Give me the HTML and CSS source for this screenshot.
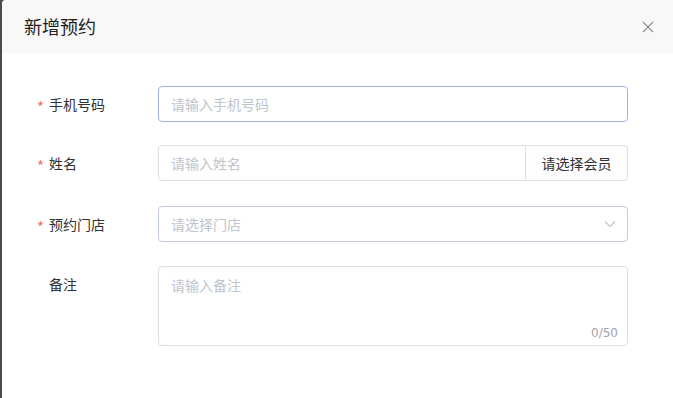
FILE: index.html
```html
<!DOCTYPE html>
<html lang="zh-CN">
<head>
  <meta charset="UTF-8" />
  <title>新增预约</title>
  <link rel="stylesheet" href="styles.css">
</head>
<body>
  <div class="dialog">
    <div class="dialog-header">
      <span class="dialog-title">新增预约</span>
      <span class="dialog-close">
        <svg width="12" height="12" viewBox="0 0 12 12"><path d="M1 1L11 11M11 1L1 11" stroke="#909399" stroke-width="1.3" fill="none"/></svg>
      </span>
    </div>

    <form class="dialog-body">
      <div class="form-item">
        <label class="form-label required">手机号码</label>
        <div class="form-control">
          <input type="text" class="input focused" placeholder="请输入手机号码">
        </div>
      </div>

      <div class="form-item">
        <label class="form-label required">姓名</label>
        <div class="form-control input-group">
          <input type="text" class="input" placeholder="请输入姓名">
          <button type="button" class="input-append">请选择会员</button>
        </div>
      </div>

      <div class="form-item">
        <label class="form-label required">预约门店</label>
        <div class="form-control select">
          <input type="text" class="input hover" placeholder="请选择门店" readonly>
          <svg class="select-arrow" width="12" height="8" viewBox="0 0 12 8"><path d="M1 1.5L6 6.5L11 1.5" stroke="#c0c4cc" stroke-width="1.1" fill="none"/></svg>
        </div>
      </div>

      <div class="form-item form-item-top">
        <label class="form-label">备注</label>
        <div class="form-control textarea-wrap">
          <textarea class="textarea" placeholder="请输入备注"></textarea>
          <span class="word-count">0/50</span>
        </div>
      </div>
    </form>
  </div>
</body>
</html>
```

FILE: styles.css
```css
/* Base */
html, body {
  margin: 0;
  padding: 0;
  height: 100%;
}
body {
  background-color: #4b4b4b;
  font-family: "Noto Sans CJK SC", "Microsoft YaHei", sans-serif;
  color: #303133;
  overflow: hidden;
}
.dialog {
  margin-left: 2px;
  width: 700px;
  height: 100%;
  background: #fff;
  border-radius: 4px 0 0 0;
}
/* Header */
.dialog-header {
  height: 53px;
  background: #f8f8f8;
  border-radius: 4px 0 0 0;
  display: flex;
  align-items: center;
  justify-content: space-between;
  padding: 0 0 0 22px;
  width: 671px;
  box-sizing: border-box;
}
.dialog-title {
  font-size: 18px;
  color: #1f1f1f;
  line-height: 24px;
  margin-top: -2px;
}
.dialog-close {
  display: flex;
  width: 12px;
  height: 12px;
  margin-right: 19px;
  margin-top: 1px;
}
/* Form */
.dialog-body {
  padding: 33px 0 0 0;
  width: 671px;
}
.form-item {
  display: flex;
  align-items: center;
  margin-bottom: 24px;
}
.form-item:first-child {
  margin-bottom: 23px;
}
.form-item:nth-child(2) {
  margin-bottom: 25px;
}
.form-item-top {
  align-items: flex-start;
}
.form-label {
  width: 156px;
  box-sizing: border-box;
  padding-left: 47px;
  font-size: 14px;
  color: #303133;
  position: relative;
  line-height: 36px;
}
.form-label.required::before {
  content: "*";
  color: #f56c6c;
  position: absolute;
  left: 35px;
  top: 3px;
  font-size: 15px;
}
.form-control {
  width: 470px;
  position: relative;
}
.input {
  display: block;
  width: 100%;
  height: 36px;
  box-sizing: border-box;
  border: 1px solid #dcdfe6;
  border-radius: 4px;
  padding: 0 12px;
  font-family: inherit;
  font-size: 14px;
  color: #606266;
  outline: none;
  background: #fff;
}
.input::placeholder,
.textarea::placeholder {
  color: #c0c4cc;
}
.input.focused {
  border-color: #9fb4e6;
}
.input.hover {
  border-color: #c3cbe0;
}
/* Append button */
.input-group {
  display: flex;
}
.input-group .input {
  flex: 1;
  border-radius: 4px 0 0 4px;
}
.input-append {
  width: 102px;
  height: 36px;
  border: 1px solid #dcdfe6;
  border-left: none;
  border-radius: 0 4px 4px 0;
  background: #fdfdfd;
  font-family: inherit;
  font-size: 14px;
  color: #303133;
  padding: 0;
}
/* Select */
.select-arrow {
  position: absolute;
  right: 12px;
  top: 14px;
}
/* Textarea */
.textarea {
  display: block;
  width: 100%;
  height: 80px;
  box-sizing: border-box;
  border: 1px solid #dcdfe6;
  border-radius: 4px;
  padding: 8px 12px;
  font-family: inherit;
  font-size: 14px;
  line-height: 20px;
  resize: none;
  outline: none;
}
.word-count {
  position: absolute;
  right: 10px;
  bottom: 6px;
  font-size: 12px;
  color: #a0a3a8;
  font-family: "DejaVu Sans", sans-serif;
}
```
